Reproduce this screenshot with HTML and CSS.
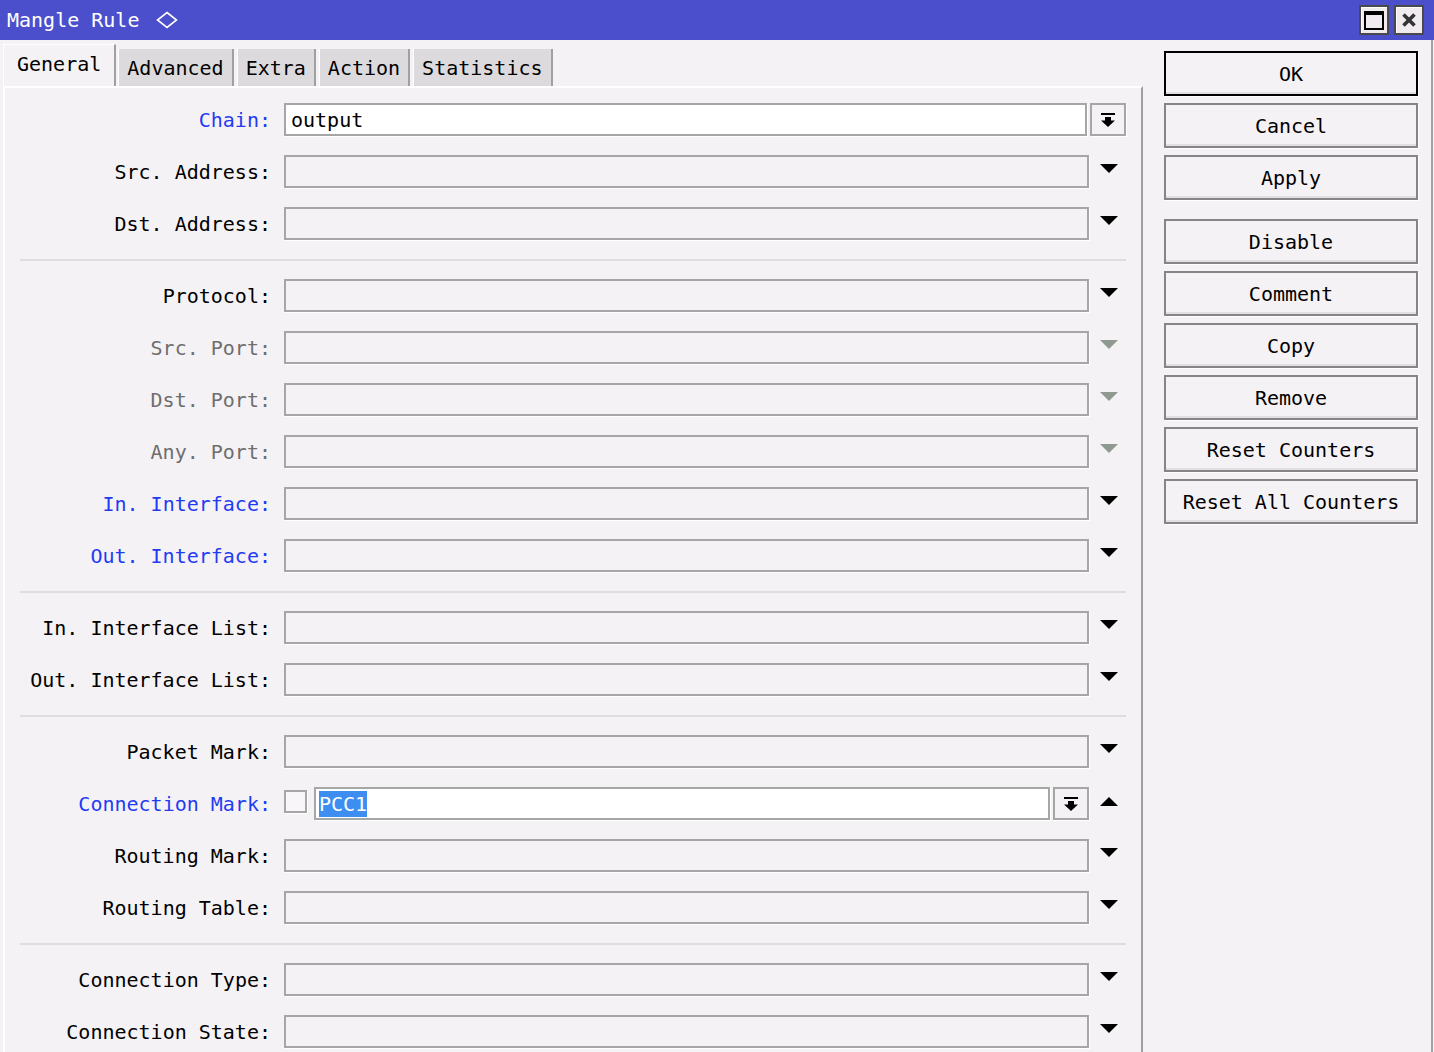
FILE: index.html
```html
<!DOCTYPE html>
<html>
<head>
<meta charset="utf-8">
<title>Mangle Rule</title>
<link rel="stylesheet" href="styles.css">
</head>
<body>
<div class="titlebar">
  <div class="title">Mangle Rule <svg class="mark" width="22" height="18" viewBox="0 0 22 18"><path d="M11 1.5L20.5 9L11 16.5L1.5 9Z" fill="none" stroke="#fff" stroke-width="1.6"/></svg></div>
  <div class="winbtns">
    <div class="wbtn"><span class="maxicon"></span></div>
    <div class="wbtn">
      <svg width="14" height="14" viewBox="0 0 14 14"><path d="M1.5 1.5L12.5 12.5M12.5 1.5L1.5 12.5" stroke="#333" stroke-width="3.6" fill="none"/></svg>
    </div>
  </div>
</div>
<div class="window">
  <div class="left">
    <div class="tabs">
      <div class="tab active">General</div>
      <div class="tab first">Advanced</div>
      <div class="tab">Extra</div>
      <div class="tab">Action</div>
      <div class="tab">Statistics</div>
    </div>
    <div class="panel">
      <div class="row">
        <div class="label blue">Chain:</div>
        <div class="combo">
          <div class="field white">output</div>
          <div class="dbtn"><svg width="14" height="14" viewBox="0 0 14 14"><rect x="0" y="0" width="14" height="2"/><rect x="4" y="4" width="6" height="4"/><path d="M0 7.5H14L7 14Z"/></svg></div>
        </div>
      </div>
      <div class="row">
        <div class="label">Src. Address:</div>
        <div class="field"></div>
        <div class="arrow"><svg width="18" height="9" viewBox="0 0 18 9"><path d="M0 0H18L9 9Z"/></svg></div>
      </div>
      <div class="row">
        <div class="label">Dst. Address:</div>
        <div class="field"></div>
        <div class="arrow"><svg width="18" height="9" viewBox="0 0 18 9"><path d="M0 0H18L9 9Z"/></svg></div>
      </div>
      <div class="sep"></div>
      <div class="row">
        <div class="label">Protocol:</div>
        <div class="field"></div>
        <div class="arrow"><svg width="18" height="9" viewBox="0 0 18 9"><path d="M0 0H18L9 9Z"/></svg></div>
      </div>
      <div class="row">
        <div class="label gray">Src. Port:</div>
        <div class="field"></div>
        <div class="arrow dis"><svg width="18" height="9" viewBox="0 0 18 9"><path d="M0 0H18L9 9Z"/></svg></div>
      </div>
      <div class="row">
        <div class="label gray">Dst. Port:</div>
        <div class="field"></div>
        <div class="arrow dis"><svg width="18" height="9" viewBox="0 0 18 9"><path d="M0 0H18L9 9Z"/></svg></div>
      </div>
      <div class="row">
        <div class="label gray">Any. Port:</div>
        <div class="field"></div>
        <div class="arrow dis"><svg width="18" height="9" viewBox="0 0 18 9"><path d="M0 0H18L9 9Z"/></svg></div>
      </div>
      <div class="row">
        <div class="label blue">In. Interface:</div>
        <div class="field"></div>
        <div class="arrow"><svg width="18" height="9" viewBox="0 0 18 9"><path d="M0 0H18L9 9Z"/></svg></div>
      </div>
      <div class="row">
        <div class="label blue">Out. Interface:</div>
        <div class="field"></div>
        <div class="arrow"><svg width="18" height="9" viewBox="0 0 18 9"><path d="M0 0H18L9 9Z"/></svg></div>
      </div>
      <div class="sep"></div>
      <div class="row">
        <div class="label">In. Interface List:</div>
        <div class="field"></div>
        <div class="arrow"><svg width="18" height="9" viewBox="0 0 18 9"><path d="M0 0H18L9 9Z"/></svg></div>
      </div>
      <div class="row">
        <div class="label">Out. Interface List:</div>
        <div class="field"></div>
        <div class="arrow"><svg width="18" height="9" viewBox="0 0 18 9"><path d="M0 0H18L9 9Z"/></svg></div>
      </div>
      <div class="sep"></div>
      <div class="row">
        <div class="label">Packet Mark:</div>
        <div class="field"></div>
        <div class="arrow"><svg width="18" height="9" viewBox="0 0 18 9"><path d="M0 0H18L9 9Z"/></svg></div>
      </div>
      <div class="row">
        <div class="label blue">Connection Mark:</div>
        <div class="cm">
          <div class="check"></div>
          <div class="field white pad3"><span class="sel">PCC1</span></div>
          <div class="dbtn"><svg width="14" height="14" viewBox="0 0 14 14"><rect x="0" y="0" width="14" height="2"/><rect x="4" y="4" width="6" height="4"/><path d="M0 7.5H14L7 14Z"/></svg></div>
        </div>
        <div class="arrow up"><svg width="18" height="9" viewBox="0 0 18 9"><path d="M0 9H18L9 0Z"/></svg></div>
      </div>
      <div class="row">
        <div class="label">Routing Mark:</div>
        <div class="field"></div>
        <div class="arrow"><svg width="18" height="9" viewBox="0 0 18 9"><path d="M0 0H18L9 9Z"/></svg></div>
      </div>
      <div class="row">
        <div class="label">Routing Table:</div>
        <div class="field"></div>
        <div class="arrow"><svg width="18" height="9" viewBox="0 0 18 9"><path d="M0 0H18L9 9Z"/></svg></div>
      </div>
      <div class="sep"></div>
      <div class="row">
        <div class="label">Connection Type:</div>
        <div class="field"></div>
        <div class="arrow"><svg width="18" height="9" viewBox="0 0 18 9"><path d="M0 0H18L9 9Z"/></svg></div>
      </div>
      <div class="row">
        <div class="label">Connection State:</div>
        <div class="field"></div>
        <div class="arrow"><svg width="18" height="9" viewBox="0 0 18 9"><path d="M0 0H18L9 9Z"/></svg></div>
      </div>
    </div>
  </div>
  <div class="actions">
    <div class="btn default">OK</div>
    <div class="btn">Cancel</div>
    <div class="btn">Apply</div>
    <div class="btn spaced">Disable</div>
    <div class="btn">Comment</div>
    <div class="btn">Copy</div>
    <div class="btn">Remove</div>
    <div class="btn">Reset Counters</div>
    <div class="btn">Reset All Counters</div>
  </div>
</div>
</body>
</html>
```

FILE: styles.css
```css
* { box-sizing: border-box; }
html, body { margin: 0; padding: 0; overflow: hidden; }
body {
  width: 1434px;
  height: 1052px;
  background: #f5f2f5;
  font-family: "DejaVu Sans Mono", "Liberation Mono", monospace;
  font-size: 20px;
  color: #000;
}

.titlebar {
  height: 40px;
  background: #4b4fcc;
  display: flex;
  align-items: center;
  justify-content: space-between;
  padding: 0 10px 0 7px;
  color: #fff;
}
.title { white-space: pre; display: flex; align-items: center; }
.title .mark { margin-left: 4px; }
.winbtns { display: flex; gap: 5px; }
.wbtn {
  width: 30px;
  height: 30px;
  border: 2px solid #4a4a4a;
  background: #efebef;
  box-shadow: inset 1px 1px 0 #fff;
  display: flex;
  align-items: center;
  justify-content: center;
}
.maxicon {
  width: 20px;
  height: 19px;
  border: 2px solid #000;
  border-top-width: 4px;
}

.window {
  display: flex;
  width: 1433px;
  height: 1012px;
  border-right: 2px solid #a2a2a2;
  overflow: hidden;
}
.left {
  width: 1143px;
  padding: 4px 0 0 3px;
  display: flex;
  flex-direction: column;
  flex-shrink: 0;
}
.tabs {
  display: flex;
  align-items: flex-end;
  height: 42px;
}
.tab {
  display: flex;
  align-items: center;
  height: 37px;
  padding: 0 8px;
  margin-left: 3px;
  background: #dddadd;
  border-left: 1px solid #fff;
  border-right: 2px solid #a0a0a0;
  white-space: pre;
}
.tab.first { margin-left: 2px; }
.tab.active {
  height: 42px;
  margin-left: 0;
  padding: 0 13px 4px;
  background: #f5f2f5;
  border-top: 1px solid #fff;
}
.panel {
  flex: 1;
  border-top: 2px solid #fff;
  border-left: 2px solid #fff;
  border-right: 2px solid #a0a0a0;
  padding-top: 15px;
  overflow: hidden;
}
.row {
  display: grid;
  grid-template-columns: 279px 805px 37px;
  align-items: start;
  height: 52px;
}
.label {
  height: 33px;
  display: flex;
  align-items: center;
  justify-content: flex-end;
  padding-right: 13px;
  white-space: pre;
}
.label.blue { color: #1f3cf2; }
.label.gray { color: #6e6e6e; }
.field {
  height: 33px;
  border: 2px solid #a6a6a6;
  background: #f5f2f5;
  box-shadow: 1px 1px 0 #fff;
  display: flex;
  align-items: center;
  padding-left: 5px;
  white-space: pre;
}
.field.white { background: #fff; }
.field.pad3 { padding-left: 3px; }
.combo {
  grid-column: 2 / 4;
  display: flex;
  gap: 3px;
}
.combo .field { flex: 1; }
.dbtn {
  width: 36px;
  height: 33px;
  flex-shrink: 0;
  border: 2px solid #a6a6a6;
  background: #f5f2f5;
  box-shadow: 1px 1px 0 #fff;
  display: flex;
  align-items: center;
  justify-content: center;
}
.cm {
  display: flex;
  gap: 3px;
}
.cm .field { flex: 1; }
.check {
  width: 23px;
  height: 23px;
  margin: 3px 4px 0 0;
  flex-shrink: 0;
  border: 2px solid #a6a6a6;
  background: #f8f6f8;
  box-shadow: 1px 1px 0 #fff;
}
.sel {
  background: #3d8ef0;
  color: #fff;
  line-height: 26px;
}
.arrow {
  padding: 9px 0 0 11px;
  display: flex;
}
.arrow svg { fill: #000; }
.arrow.dis svg { fill: #8f998f; }
.arrow.up { padding-top: 10px; }
.sep {
  height: 2px;
  width: 1106px;
  background: #dedcde;
  margin: 0 0 18px 15px;
}

.actions {
  margin-left: 21px;
  width: 254px;
  flex-shrink: 0;
  padding-top: 11px;
  display: flex;
  flex-direction: column;
  gap: 7px;
}
.btn {
  height: 45px;
  border: 2px solid #858585;
  background: #f5f2f5;
  box-shadow: inset 0 -2px 0 #e2dfe2, 1px 1px 0 #fff;
  display: flex;
  align-items: center;
  justify-content: center;
  white-space: pre;
}
.btn.default { border-color: #000; }
.btn.spaced { margin-top: 12px; }
```
